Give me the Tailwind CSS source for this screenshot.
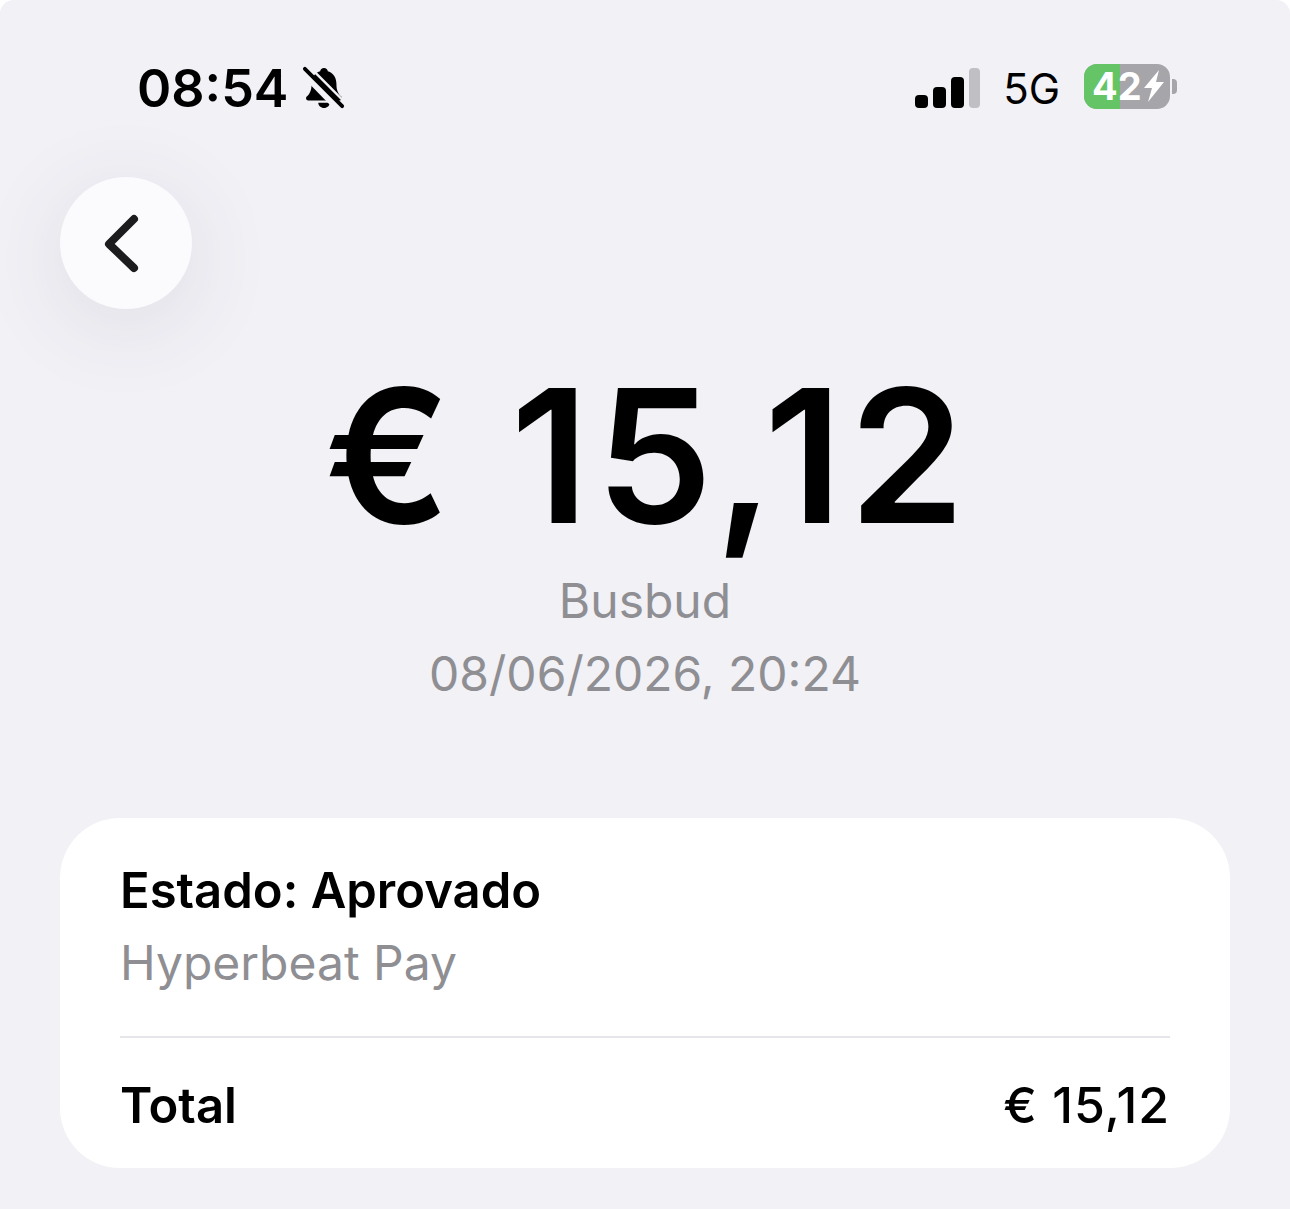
<!DOCTYPE html>
<html lang="pt">
<head>
    <meta charset="UTF-8">
    <meta name="viewport" content="width=device-width, initial-scale=1.0">
    <title>Detalhes</title>
    <script src="https://cdn.jsdelivr.net/npm/@tailwindcss/browser@4"></script>
</head>
<body class="bg-white font-['Inter',sans-serif] overflow-hidden">
    <div class="w-[1290px] h-[1209px] bg-[#f1f1f6] rounded-tr-[14px] rounded-tl-[14px] flex flex-col">
        <!-- Status bar -->
        <div class="h-[118px] pt-[60px] pl-[137px] pr-[113px] flex items-start justify-between">
            <div class="flex items-center h-[56px]">
                <span class="mt-[2px] text-[52px] leading-[56px] font-semibold text-black">08:54</span>
                <svg class="ml-[13px]" width="44" height="46" viewBox="0 0 46 46">
                    <path d="M23 2c-2.200 0-3.800 1.500-4 3.500C12.500 7.500 10 13 10 19c0 6-1.500 9.500-5 13-1.500 1.500-.7 4 1.500 4h33c2.200 0 3-2.500 1.500-4-3.500-3.500-5-7-5-13 0-6-2.500-11.500-9-13.500C26.800 3.500 25.200 2 23 2z" fill="#000"/>
                    <path d="M17 38.500h12c0 3-2.700 5.500-6 5.500s-6-2.500-6-5.500z" fill="#000"/>
                    <path d="M0 5l40 41" stroke="#f1f1f6" stroke-width="8"/>
                    <path d="M3 3l39 39" stroke="#000" stroke-width="4" stroke-linecap="round"/>
                    <path d="M9 2l36 36" stroke="#f1f1f6" stroke-width="2.500"/>
                </svg>
            </div>
            <div class="flex items-center h-[56px]">
                <div class="flex items-end gap-[5px] h-[40px]">
                    <div class="w-[13px] h-[13px] rounded-[4px] bg-black"></div>
                    <div class="w-[13px] h-[21px] rounded-[4px] bg-black"></div>
                    <div class="w-[13px] h-[31px] rounded-[4px] bg-black"></div>
                    <div class="w-[11px] h-[40px] rounded-[4px] bg-[#bfbfc4]"></div>
                </div>
                <span class="ml-[23px] mt-[2px] text-[42px] leading-[56px] font-normal text-black">5G</span>
                <div class="ml-[24px] mt-[-4px] relative w-[86px] h-[45px] rounded-[13px] bg-[#a5a5aa] overflow-hidden flex items-center">
                    <div class="absolute left-0 top-0 bottom-0 w-[36px] bg-[#65c466]"></div>
                    <span class="relative pl-[8px] text-[38px] leading-[45px] font-bold text-white">42</span>
                    <svg class="relative" width="24" height="36" viewBox="0 0 24 36">
                        <path d="M17 2L2 20h8L6 34l16-20h-8l3-12z" fill="#fff"/>
                    </svg>
                </div>
                <div class="ml-[2px] mt-[-4px] w-[5px] h-[15px] rounded-r-[4px] bg-[#a5a5aa]"></div>
            </div>
        </div>

        <!-- Back button -->
        <div class="pl-[60px] pt-[59px]">
            <div class="w-[132px] h-[132px] rounded-full bg-[#fbfbfe] flex items-center justify-center shadow-[0_16px_90px_rgba(60,60,80,0.11)]">
                <svg class="mr-[10px]" width="40" height="64" viewBox="0 0 40 64" fill="none">
                    <path d="M33 8L8 33l25 24" stroke="#1c1c1f" stroke-width="8" stroke-linecap="round" stroke-linejoin="round"/>
                </svg>
            </div>
        </div>

        <!-- Amount -->
        <div class="mt-[37px] flex flex-col items-center">
            <div class="h-[220px] ml-[6px] leading-[220px] text-[186px] font-semibold text-black tracking-[6.500px]">€ 15,12</div>
            <div class="mt-[-2px] text-[48px] leading-[73px] text-[#8e8e93]">Busbud</div>
            <div class="text-[48px] leading-[74px] text-[#8e8e93]">08/06/2026, 20:24</div>
        </div>

        <!-- Card -->
        <div class="mt-[107px] mx-[60px] h-[350px] rounded-[60px] bg-white px-[60px] pt-[37px]">
            <div class="text-[49px] leading-[72px] font-semibold text-black">Estado: Aprovado</div>
            <div class="mt-[-1px] text-[48px] leading-[74px] text-[#8e8e93]">Hyperbeat Pay</div>
            <div class="mt-[36px] h-[2px] bg-[#e5e5ea]"></div>
            <div class="mt-[30px] flex items-center justify-between text-black">
                <span class="mt-[2px] text-[49px] leading-[72px] font-semibold">Total</span>
                <span class="text-[50px] leading-[68px] font-medium tracking-[1px]">€ 15,12</span>
            </div>
        </div>
    </div>
</body>
</html>
